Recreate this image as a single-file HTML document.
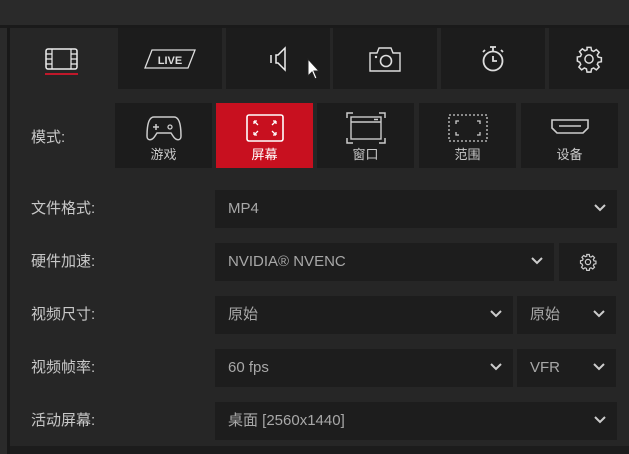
<!DOCTYPE html>
<html><head><meta charset="utf-8"><style>
*{margin:0;padding:0;box-sizing:border-box}
body{width:629px;height:454px;background:#262626;position:relative;overflow:hidden;font-family:"Liberation Sans","Noto Sans CJK SC",sans-serif}
.a{position:absolute}
.tab{position:absolute;top:28px;height:61px;background:#1c1c1c;display:flex;align-items:center;justify-content:center}
.mb{position:absolute;top:103px;height:65px;background:#1c1c1c;color:#c8c8c8;font-size:13px;text-align:center}
.mb svg{position:absolute;left:50%;top:33px;transform:translate(-50%,-50%) translateY(-8px)}
.mb span{position:absolute;left:0;right:0;top:44px;line-height:16px}
.lbl{position:absolute;left:31px;color:#c8c8c8;font-size:15px}
.dd{position:absolute;height:38px;background:#1d1d1d;color:#a8a8a8;font-size:15px;padding-left:13px;line-height:38px}
.dd .c{position:absolute;right:11px;top:14px}
</style></head><body>
<div class="a" style="left:0;top:0;width:629px;height:25px;background:#2a2a2a"></div>
<div class="a" style="left:0;top:25px;width:629px;height:3px;background:#1a1a1a"></div>
<div class="a" style="left:0;top:28px;width:7px;height:426px;background:#2a2a2a"></div>
<div class="a" style="left:7px;top:28px;width:3px;height:426px;background:#181818"></div>
<div class="a" style="left:10px;top:446px;width:619px;height:8px;background:#1c1c1c"></div>
<svg class="a" style="left:45px;top:48px" width="34" height="28"><rect x="1" y="1" width="31" height="20" rx="2" fill="none" stroke="#eee" stroke-width="1.5"/><path d="M7 1V21M26 1V21M1 6H7M1 11H7M1 16H7M26 6H32M26 11H32M26 16H32" stroke="#eee" stroke-width="1.2"/><rect x="0" y="25" width="33" height="2" fill="#c0182a"/></svg>
<div class="tab" style="left:118px;width:104px"><svg width="52" height="22"><path d="M8 2H51L44 20H1Z" fill="none" stroke="#ddd" stroke-width="1.3"/><text x="26" y="16" font-size="11" font-weight="bold" fill="#ddd" text-anchor="middle" font-family="Liberation Sans">LIVE</text></svg></div>
<div class="tab" style="left:226px;width:104px"><svg width="20" height="28"><path d="M3 10V18M8 10H10L17 3V25L10 18H8Z" fill="none" stroke="#eee" stroke-width="1.5"/></svg></div>
<svg class="a" style="left:307px;top:58px" width="16" height="24"><path d="M1 1V18L5 14L8 21L10 20L7 13H12Z" fill="#fff" stroke="#222" stroke-width="1"/></svg>
<div class="tab" style="left:333px;width:104px"><svg width="34" height="28"><path d="M2 8H9L11 3H23L25 8H32V26H2Z" fill="none" stroke="#ddd" stroke-width="1.4"/><circle cx="18" cy="16" r="5.5" fill="none" stroke="#ddd" stroke-width="1.6"/><circle cx="8" cy="12" r="1.2" fill="#ddd"/></svg></div>
<div class="tab" style="left:441px;width:104px"><svg width="28" height="30"><circle cx="14" cy="17" r="9.5" fill="none" stroke="#ddd" stroke-width="1.8"/><path d="M11 3H17M14 3V7M14 12V17H18M4 8L6 6M24 8L22 6" stroke="#ddd" stroke-width="1.8" fill="none"/></svg></div>
<div class="tab" style="left:549px;width:80px"><svg width="28" height="28" viewBox="0 0 24 24"><path d="M10.3 2h3.4l.5 2.7 1.8.8 2.3-1.6 2.4 2.4-1.6 2.3.8 1.8 2.7.5v3.4l-2.7.5-.8 1.8 1.6 2.3-2.4 2.4-2.3-1.6-1.8.8-.5 2.7h-3.4l-.5-2.7-1.8-.8-2.300 1.6-2.4-2.4 1.6-2.3-.8-1.8L2 13.7v-3.4l2.7-.5.8-1.8-1.6-2.3 2.4-2.4 2.3 1.6 1.8-.8z" fill="none" stroke="#ddd" stroke-width="1.3"/><circle cx="12" cy="12" r="3.5" fill="none" stroke="#ddd" stroke-width="1.3"/></svg></div>
<div class="lbl" style="top:126px">模式:</div>
<div class="mb" style="left:115px;width:97px"><svg width="36" height="28"><path d="M8 3H28C34 3 35 14 35 22C35 27 30 27 27 22L25 19H11L9 22C6 27 1 27 1 22C1 14 2 3 8 3Z" fill="none" stroke="#ccc" stroke-width="1.5"/><path d="M10 10V16M7 13H13" stroke="#ccc" stroke-width="1.5"/><circle cx="24" cy="13" r="2" fill="none" stroke="#ccc" stroke-width="1.3"/></svg><span>游戏</span></div>
<div class="mb" style="left:216px;width:97px;background:#c8101f;color:#fff"><svg width="40" height="30"><rect x="2" y="2" width="36" height="26" rx="2" fill="none" stroke="#fff" stroke-width="1.6"/><path d="M9 8L13 12M9 8V11M9 8H12M31 8L27 12M31 8V11M31 8H28M9 22L13 18M9 22V19M9 22H12M31 22L27 18M31 22V19M31 22H28" stroke="#fff" stroke-width="1.3" fill="none"/></svg><span>屏幕</span></div>
<div class="mb" style="left:317px;width:97px"><svg width="40" height="32"><path d="M1 6V1H7M33 1H39V6M1 26V31H7M33 31H39V26" stroke="#ccc" stroke-width="1.5" fill="none"/><rect x="5" y="5" width="30" height="22" fill="none" stroke="#ccc" stroke-width="1.4"/><path d="M5 10H35M28 7.5H32" stroke="#ccc" stroke-width="1.5"/></svg><span>窗口</span></div>
<div class="mb" style="left:419px;width:97px"><svg width="40" height="30"><rect x="1" y="2" width="38" height="26" fill="none" stroke="#ccc" stroke-width="1.3" stroke-dasharray="2 2"/><path d="M8 11V8H11M32 11V8H29M8 19V22H11M32 19V22H29" stroke="#ccc" stroke-width="1.3" fill="none"/></svg><span>范围</span></div>
<div class="mb" style="left:521px;width:97px"><svg width="40" height="28"><path d="M2 6H38V14L33 19H7L2 14Z" fill="none" stroke="#ccc" stroke-width="1.6"/><path d="M9 12H31" stroke="#ccc" stroke-width="1.5"/></svg><span>设备</span></div>
<div class="lbl" style="top:197px">文件格式:</div>
<div class="dd" style="left:215px;top:190px;width:402px">MP4<svg class="c" width="12" height="9"><path d="M1 1L6 6L11 1" stroke="#ccc" stroke-width="2" fill="none"/></svg></div>
<div class="lbl" style="top:250px">硬件加速:</div>
<div class="dd" style="left:215px;top:243px;width:339px">NVIDIA® NVENC<svg class="c" width="12" height="9"><path d="M1 1L6 6L11 1" stroke="#ccc" stroke-width="2" fill="none"/></svg></div>
<div class="dd" style="left:559px;top:243px;width:58px;padding:0"><svg style="position:absolute;left:20px;top:10px" width="18" height="18" viewBox="0 0 24 24"><path d="M10.3 2h3.4l.5 2.7 1.8.8 2.3-1.6 2.4 2.4-1.6 2.3.8 1.8 2.7.5v3.4l-2.7.5-.8 1.8 1.6 2.3-2.4 2.4-2.3-1.6-1.8.8-.5 2.7h-3.4l-.5-2.7-1.8-.8-2.3 1.6-2.4-2.4 1.6-2.3-.8-1.8L2 13.7v-3.4l2.7-.5.8-1.8-1.6-2.3 2.4-2.4 2.3 1.6 1.8-.8z" fill="none" stroke="#ccc" stroke-width="1.6"/><circle cx="12" cy="12" r="3.5" fill="none" stroke="#ccc" stroke-width="1.6"/></svg></div>
<div class="lbl" style="top:303px">视频尺寸:</div>
<div class="dd" style="left:215px;top:296px;width:298px">原始<svg class="c" width="12" height="9"><path d="M1 1L6 6L11 1" stroke="#ccc" stroke-width="2" fill="none"/></svg></div>
<div class="dd" style="left:517px;top:296px;width:99px">原始<svg class="c" width="12" height="9"><path d="M1 1L6 6L11 1" stroke="#ccc" stroke-width="2" fill="none"/></svg></div>
<div class="lbl" style="top:356px">视频帧率:</div>
<div class="dd" style="left:215px;top:349px;width:298px">60 fps<svg class="c" width="12" height="9"><path d="M1 1L6 6L11 1" stroke="#ccc" stroke-width="2" fill="none"/></svg></div>
<div class="dd" style="left:517px;top:349px;width:99px">VFR<svg class="c" width="12" height="9"><path d="M1 1L6 6L11 1" stroke="#ccc" stroke-width="2" fill="none"/></svg></div>
<div class="lbl" style="top:409px">活动屏幕:</div>
<div class="dd" style="left:215px;top:402px;width:402px">桌面 [2560x1440]<svg class="c" width="12" height="9"><path d="M1 1L6 6L11 1" stroke="#ccc" stroke-width="2" fill="none"/></svg></div>
</body></html>
